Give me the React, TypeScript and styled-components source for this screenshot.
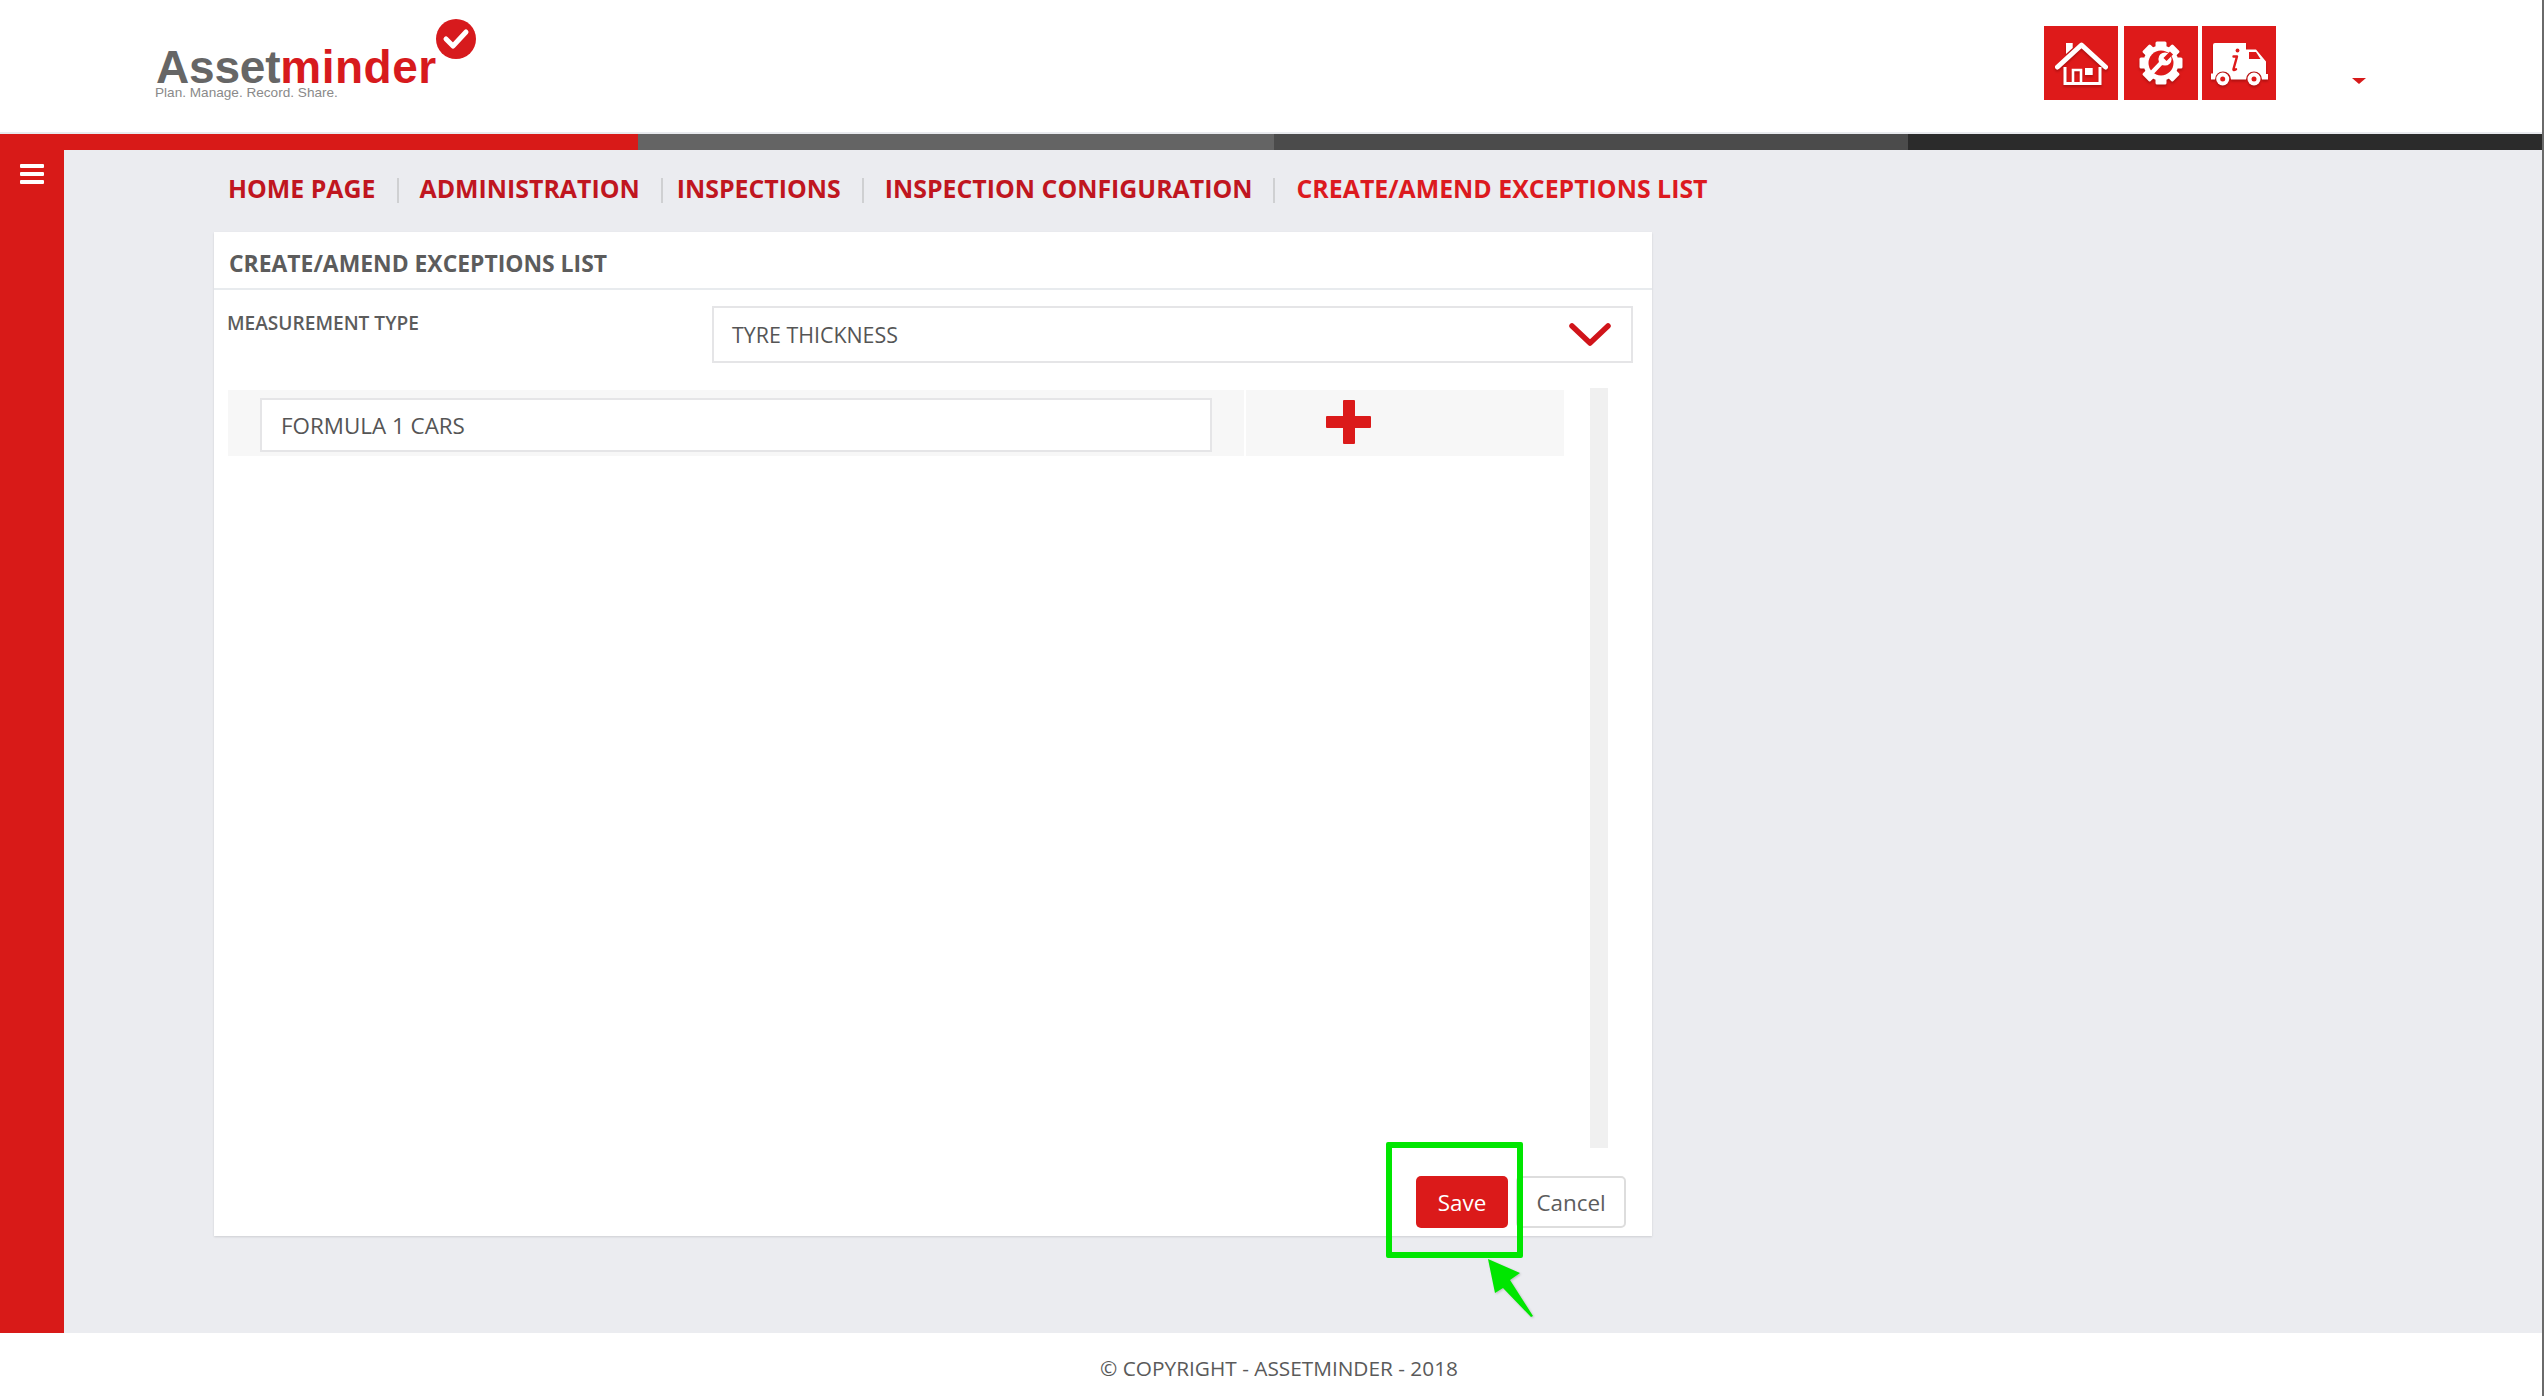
import React from "react";
import styled, { createGlobalStyle } from "styled-components";

const GlobalStyle = createGlobalStyle`
  html, body { margin: 0; padding: 0; background: #fff; overflow: hidden; }
  * { box-sizing: border-box; }
  body { font-family: "Open Sans", "Liberation Sans", sans-serif; }
`;

const Frame = styled.div`
  display: flex;
  width: 2544px;
  height: 1396px;
`;

const WindowEdge = styled.div`
  width: 2px;
  background: #6a6a6a;
`;

const Page = styled.div`
  flex: 1;
  min-width: 0;
  display: flex;
  flex-direction: column;
`;

const Header = styled.header`
  height: 134px;
  flex: none;
  border-bottom: 2px solid #e8eaee;
  background: #fff;
  display: flex;
  align-items: flex-start;
`;

const Logo = styled.div`
  position: relative;
  margin: 45px 0 0 156px;
  width: 330px;
`;

const LogoWord = styled.div`
  font-family: "Liberation Sans", Arial, sans-serif;
  font-weight: 700;
  font-size: 46px;
  line-height: 44px;
  letter-spacing: -0.2px;
  color: #666;
  white-space: nowrap;
`;

const LogoAccent = styled.span`
  color: #d71a1d;
  letter-spacing: 0.5px;
`;

const LogoTag = styled.div`
  font-family: "Liberation Sans", Arial, sans-serif;
  font-size: 13.6px;
  line-height: 14px;
  color: #8a8a8a;
  margin: -3px 0 0 -1px;
  white-space: nowrap;
`;

const LogoBadge = styled.svg`
  position: absolute;
  left: 279px;
  top: -27px;
`;

const HeaderIcons = styled.nav`
  margin: 26px 0 0 auto;
  display: flex;
`;

const IconTile = styled.a<{ $gap?: number }>`
  width: 74px;
  height: 74px;
  background: #de1a1a;
  display: flex;
  align-items: center;
  justify-content: center;
  margin-right: ${(p) => p.$gap ?? 0}px;

  svg {
    filter: drop-shadow(0 2px 1px rgba(90, 0, 0, 0.35));
  }
`;

const Caret = styled.div`
  width: 0;
  height: 0;
  margin: 78px 176px 0 76px;
  border-left: 7px solid transparent;
  border-right: 7px solid transparent;
  border-top: 6px solid #d71a1a;
`;

const ColorBar = styled.div`
  height: 16px;
  flex: none;
  display: grid;
  grid-template-columns: 638px 636px 634px 1fr;
`;

const ColorSegment = styled.div<{ $color: string }>`
  background: ${(p) => p.$color};
`;

const Body = styled.div`
  flex: 1;
  min-height: 0;
  display: flex;
`;

const Sidebar = styled.aside`
  width: 64px;
  flex: none;
  background: #d81a18;
  padding: 14px 0 0 20px;
`;

const MenuBars = styled.div`
  width: 24px;
  height: 20px;
  display: flex;
  flex-direction: column;
  justify-content: space-between;
`;

const MenuBar = styled.span`
  display: block;
  height: 4px;
  border-radius: 1px;
  background: #fff;
`;

const Main = styled.main`
  flex: 1;
  min-width: 0;
  background: #ebecf0;
  padding-left: 150px;
`;

const Breadcrumb = styled.nav`
  height: 82px;
  padding: 24px 0 0 14px;
  display: flex;
  align-items: flex-start;
`;

const Crumb = styled.a<{ $current?: boolean }>`
  font-weight: 700;
  font-size: 24.9px;
  line-height: 28px;
  white-space: nowrap;
  color: ${(p) => (p.$current ? "#dc1a1f" : "#c0161f")};
`;

const CrumbSep = styled.span<{ $tight?: boolean }>`
  width: 2px;
  height: 25px;
  margin: 4px ${(p) => (p.$tight ? 14 : 21)}px 0 21px;
  background: #cfd0d2;
  flex: none;
`;

const Card = styled.section`
  position: relative;
  width: 1438px;
  height: 1004px;
  background: #fff;
  box-shadow: 0 1px 2px rgba(0, 0, 0, 0.12);
  display: flex;
  flex-direction: column;
`;

const CardHeader = styled.h2`
  margin: 0;
  height: 58px;
  flex: none;
  padding: 0 15px;
  border-bottom: 2px solid #e8ebee;
  font-size: 22.9px;
  font-weight: 700;
  line-height: 63px;
  color: #5c5c5c;
`;

const TypeRow = styled.div`
  display: flex;
  padding: 16px 19px 0 13px;
`;

const FieldLabel = styled.label`
  width: 485px;
  flex: none;
  font-size: 19.1px;
  font-weight: 600;
  line-height: 34px;
  color: #5c5c5c;
`;

const SelectBox = styled.div`
  flex: 1;
  height: 57px;
  padding: 0 20px 0 18px;
  border: 2px solid #e5e5e7;
  display: flex;
  align-items: center;
  justify-content: space-between;
  font-size: 21.4px;
  color: #555;
`;

const ListArea = styled.div`
  flex: 1;
  min-height: 0;
  display: flex;
  padding: 27px 44px 0 14px;
`;

const ListRows = styled.div`
  width: 1336px;
  flex: none;
`;

const ListRow = styled.div`
  display: flex;
  gap: 2px;
  height: 66px;
`;

const NameCell = styled.div`
  width: 1016px;
  flex: none;
  background: #f7f7f7;
  padding: 8px 0 0 32px;
`;

const NameInput = styled.div`
  width: 952px;
  height: 54px;
  background: #fff;
  border: 2px solid #e5e5e7;
  padding-left: 19px;
  display: flex;
  align-items: center;
  font-size: 22.4px;
  color: #555;
`;

const ActionCell = styled.div`
  flex: 1;
  background: #f7f7f7;
  padding: 10px 0 0 80px;
`;

const ScrollTrack = styled.div`
  width: 18px;
  margin: -2px 0 0 26px;
  background: #f0f0f0;
`;

const Actions = styled.div`
  height: 88px;
  flex: none;
  padding: 28px 26px 0 0;
  display: flex;
  align-items: flex-start;
  justify-content: flex-end;
  gap: 8px;
`;

const PrimaryButton = styled.button`
  width: 92px;
  height: 52px;
  border: none;
  border-radius: 5px;
  background: #db1a1a;
  color: #fff;
  font: 400 22.4px "Open Sans", sans-serif;
`;

const GhostButton = styled.button`
  width: 110px;
  height: 52px;
  border: 2px solid #ddd;
  border-radius: 5px;
  background: #fff;
  color: #5c5c5c;
  font: 400 22.4px "Open Sans", sans-serif;
`;

const Highlight = styled.div`
  position: absolute;
  left: 1172px;
  top: 910px;
  width: 137px;
  height: 116px;
  border: 6px solid #00e600;
  border-radius: 2px;
`;

const Pointer = styled.svg`
  position: absolute;
  left: 1270px;
  top: 1025px;
  filter: drop-shadow(1px 1px 1px rgba(0, 0, 0, 0.2));
`;

const Footer = styled.footer`
  height: 63px;
  flex: none;
  background: #fff;
  padding-left: 16px;
  text-align: center;
  font-size: 20.8px;
  line-height: 70px;
  color: #5a5a5a;
`;

const crumbs = ["HOME PAGE", "ADMINISTRATION", "INSPECTIONS", "INSPECTION CONFIGURATION"];

const HouseIcon = () => (
  <svg width="54" height="48" viewBox="0 0 54 48">
    <path d="M12 4h6.700v5L12 15z" fill="#fff" />
    <path d="M3.500 28 27.500 6l24 22" fill="none" stroke="#fff" strokeWidth="5" strokeLinecap="round" strokeLinejoin="round" />
    <path d="M11 28v16.500h35V28" fill="none" stroke="#fff" strokeWidth="3" />
    <path d="M19 45V31h8v14" fill="none" stroke="#fff" strokeWidth="2.600" />
    <rect x="31" y="29" width="7.700" height="7" fill="#fff" />
  </svg>
);

const GearIcon = () => (
  <svg width="46" height="46" viewBox="0 0 46 46">
    <circle cx="23" cy="23" r="17.500" fill="#fff" />
    {[0, 45, 90, 135, 180, 225, 270, 315].map((angle) => (
      <rect key={angle} x="17.500" y="1.500" width="11" height="8" rx="1.500" fill="#fff" transform={`rotate(${angle} 23 23)`} />
    ))}
    <circle cx="23" cy="23" r="12.500" fill="#de1a1a" />
    <path d="M14.500 32 24 22" stroke="#fff" strokeWidth="4.400" strokeLinecap="round" />
    <circle cx="27" cy="19" r="6.600" fill="#fff" />
    <path d="M27 19.500 33.500 13" stroke="#de1a1a" strokeWidth="4.400" />
  </svg>
);

const TruckIcon = () => (
  <svg width="58" height="46" viewBox="0 0 58 46">
    <path d="M5 3h31v6.500h10l10 12v12.500h2v5.500h-6a8 8 0 0 0-16 0H21a8 8 0 0 0-16 0H1v-6h2V5a2 2 0 0 1 2-2z" fill="#fff" />
    <path d="M39 12h7l4.500 7H39z" fill="#de1a1a" />
    <circle cx="12.700" cy="39" r="6.500" fill="#fff" />
    <circle cx="12.700" cy="39" r="2.500" fill="#de1a1a" />
    <circle cx="44" cy="39" r="6.500" fill="#fff" />
    <circle cx="44" cy="39" r="2.500" fill="#de1a1a" />
    <circle cx="27.500" cy="10.500" r="1.900" fill="#de1a1a" />
    <path d="M23.500 16.500h3.500L23.500 29q-.4 2 2.500 .2" fill="none" stroke="#de1a1a" strokeWidth="2.400" strokeLinecap="round" strokeLinejoin="round" />
  </svg>
);

export default function App() {
  return (
    <>
      <GlobalStyle />
      <Frame>
        <Page>
          <Header>
            <Logo>
              <LogoWord>
                Asset<LogoAccent>minder</LogoAccent>
              </LogoWord>
              <LogoTag>Plan. Manage. Record. Share.</LogoTag>
              <LogoBadge width="42" height="42" viewBox="0 0 42 42">
                <circle cx="21" cy="21" r="20" fill="#d71a1d" />
                <path d="M11 21l7 7 13-14" fill="none" stroke="#fff" strokeWidth="5" strokeLinecap="round" strokeLinejoin="round" />
              </LogoBadge>
            </Logo>
            <HeaderIcons>
              <IconTile $gap={6}>
                <HouseIcon />
              </IconTile>
              <IconTile $gap={4}>
                <GearIcon />
              </IconTile>
              <IconTile>
                <TruckIcon />
              </IconTile>
            </HeaderIcons>
            <Caret />
          </Header>
          <ColorBar>
            <ColorSegment $color="#d81a18" />
            <ColorSegment $color="#646464" />
            <ColorSegment $color="#4b4b4b" />
            <ColorSegment $color="#2b2b2b" />
          </ColorBar>
          <Body>
            <Sidebar>
              <MenuBars>
                <MenuBar />
                <MenuBar />
                <MenuBar />
              </MenuBars>
            </Sidebar>
            <Main>
              <Breadcrumb>
                {crumbs.map((c) => (
                  <React.Fragment key={c}>
                    <Crumb>{c}</Crumb>
                    <CrumbSep $tight={c === "ADMINISTRATION"} />
                  </React.Fragment>
                ))}
                <Crumb $current>CREATE/AMEND EXCEPTIONS LIST</Crumb>
              </Breadcrumb>
              <Card>
                <CardHeader>CREATE/AMEND EXCEPTIONS LIST</CardHeader>
                <TypeRow>
                  <FieldLabel>MEASUREMENT TYPE</FieldLabel>
                  <SelectBox>
                    TYRE THICKNESS
                    <svg width="42" height="24" viewBox="0 0 42 24">
                      <path d="M3 3l18 17L39 3" fill="none" stroke="#d0141a" strokeWidth="5.500" strokeLinecap="round" strokeLinejoin="round" />
                    </svg>
                  </SelectBox>
                </TypeRow>
                <ListArea>
                  <ListRows>
                    <ListRow>
                      <NameCell>
                        <NameInput>FORMULA 1 CARS</NameInput>
                      </NameCell>
                      <ActionCell>
                        <svg width="45" height="44" viewBox="0 0 45 44">
                          <path d="M17 1a1 1 0 0 1 1-1h10a1 1 0 0 1 1 1v15h15a1 1 0 0 1 1 1v10a1 1 0 0 1-1 1H29v15a1 1 0 0 1-1 1H18a1 1 0 0 1-1-1V28H1a1 1 0 0 1-1-1V17a1 1 0 0 1 1-1h16z" fill="#db1a1a" />
                        </svg>
                      </ActionCell>
                    </ListRow>
                  </ListRows>
                  <ScrollTrack />
                </ListArea>
                <Actions>
                  <PrimaryButton>Save</PrimaryButton>
                  <GhostButton>Cancel</GhostButton>
                </Actions>
                <Highlight />
                <Pointer width="52" height="62" viewBox="0 0 52 62">
                  <path d="M4 2 36 16 26 23 49 59 47 60 19 31 11 36z" fill="#00e600" />
                </Pointer>
              </Card>
            </Main>
          </Body>
          <Footer>© COPYRIGHT - ASSETMINDER - 2018</Footer>
        </Page>
        <WindowEdge />
      </Frame>
    </>
  );
}
